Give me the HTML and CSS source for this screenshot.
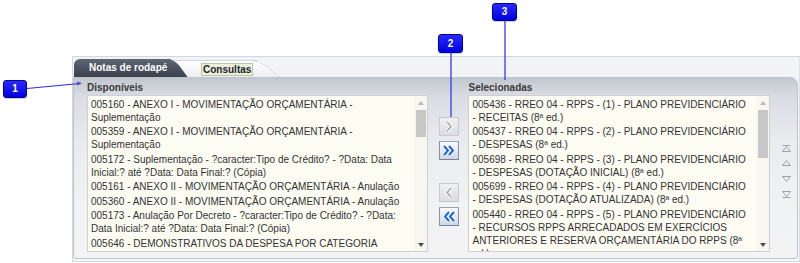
FILE: index.html
```html
<!DOCTYPE html>
<html>
<head>
    <title>Notas de rodapé - Consultas</title>
    <link rel="stylesheet" href="styles.css">
</head>
<body>
    <div class="widget">
        <div class="tabs">
            <div class="tab tab-dark">Notas de rodapé</div>
            <div class="tab tab-light"><span class="focus">Consultas</span></div>
        </div>
        <div class="panel">
            <div class="col col-left">
                <div class="label">Disponíveis</div>
                <div class="listbox">
                    <div class="items">
                        <div class="item">005160 - ANEXO I - MOVIMENTAÇÃO ORÇAMENTÁRIA - Suplementação</div>
                        <div class="item">005359 - ANEXO I - MOVIMENTAÇÃO ORÇAMENTÁRIA - Suplementação</div>
                        <div class="item">005172 - Suplementação - ?caracter:Tipo de Crédito? - ?Data: Data Inicial:? até ?Data: Data Final:? (Cópia)</div>
                        <div class="item">005161 - ANEXO II - MOVIMENTAÇÃO ORÇAMENTÁRIA - Anulação</div>
                        <div class="item">005360 - ANEXO II - MOVIMENTAÇÃO ORÇAMENTÁRIA - Anulação</div>
                        <div class="item">005173 - Anulação Por Decreto - ?caracter:Tipo de Crédito? - ?Data: Data Inicial:? até ?Data: Data Final:? (Cópia)</div>
                        <div class="item">005646 - DEMONSTRATIVOS DA DESPESA POR CATEGORIA</div>
                    </div>
                    <div class="vscroll">
                        <span class="arrow arrow-up"></span>
                        <div class="track"><div class="thumb thumb-left"></div></div>
                        <span class="arrow arrow-down"></span>
                    </div>
                </div>
            </div>

            <div class="moves">
                <button class="move move-off">
                    <svg width="18" height="17" viewBox="0 0 18 17"><polyline points="7,4 11,8.5 7,13" fill="none" stroke="#fff" stroke-width="3.4"/><polyline points="7,4 11,8.5 7,13" fill="none" stroke="#a6a8ab" stroke-width="1.7"/></svg>
                </button>
                <button class="move move-on">
                    <svg width="18" height="17" viewBox="0 0 18 17"><polyline points="4,4 8,8.5 4,13" fill="none" stroke="#fff" stroke-width="3.6"/><polyline points="9,4 13,8.5 9,13" fill="none" stroke="#fff" stroke-width="3.6"/><polyline points="4,4 8,8.5 4,13" fill="none" stroke="#1863d8" stroke-width="2"/><polyline points="9,4 13,8.5 9,13" fill="none" stroke="#1863d8" stroke-width="2"/></svg>
                </button>
                <button class="move move-off move-back">
                    <svg width="18" height="17" viewBox="0 0 18 17"><polyline points="11,4 7,8.5 11,13" fill="none" stroke="#fff" stroke-width="3.4"/><polyline points="11,4 7,8.5 11,13" fill="none" stroke="#a6a8ab" stroke-width="1.7"/></svg>
                </button>
                <button class="move move-on">
                    <svg width="18" height="17" viewBox="0 0 18 17"><polyline points="9,4 5,8.5 9,13" fill="none" stroke="#fff" stroke-width="3.6"/><polyline points="14,4 10,8.5 14,13" fill="none" stroke="#fff" stroke-width="3.6"/><polyline points="9,4 5,8.5 9,13" fill="none" stroke="#1863d8" stroke-width="2"/><polyline points="14,4 10,8.5 14,13" fill="none" stroke="#1863d8" stroke-width="2"/></svg>
                </button>
            </div>

            <div class="col col-right">
                <div class="label">Selecionadas</div>
                <div class="listbox">
                    <div class="items">
                        <div class="item">005436 - RREO 04 - RPPS - (1) - PLANO PREVIDENCIÁRIO <span class="nb">- RECEITAS</span> (8ª ed.)</div>
                        <div class="item">005437 - RREO 04 - RPPS - (2) - PLANO PREVIDENCIÁRIO <span class="nb">- DESPESAS</span> (8ª ed.)</div>
                        <div class="item">005698 - RREO 04 - RPPS - (3) - PLANO PREVIDENCIÁRIO <span class="nb">- DESPESAS</span> (DOTAÇÃO INICIAL) (8ª ed.)</div>
                        <div class="item">005699 - RREO 04 - RPPS - (4) - PLANO PREVIDENCIÁRIO <span class="nb">- DESPESAS</span> (DOTAÇÃO ATUALIZADA) (8ª ed.)</div>
                        <div class="item">005440 - RREO 04 - RPPS - (5) - PLANO PREVIDENCIÁRIO <span class="nb">- RECURSOS</span> RPPS ARRECADADOS EM EXERCÍCIOS ANTERIORES E RESERVA ORÇAMENTÁRIA DO RPPS (8ª ed.)</div>
                    </div>
                    <div class="vscroll">
                        <span class="arrow arrow-up"></span>
                        <div class="track"><div class="thumb thumb-right"></div></div>
                        <span class="arrow arrow-down"></span>
                    </div>
                </div>
            </div>

            <div class="order">
                <svg width="9" height="54" viewBox="0 0 9 54">
                    <g fill="none" stroke="#9ea1a6" stroke-width="1">
                        <line x1="0.5" y1="0.5" x2="8.5" y2="0.5"/>
                        <polygon points="4.5,1.5 0.5,6.5 8.5,6.5"/>
                        <polygon points="4.5,15.5 0.5,20.5 8.5,20.5"/>
                        <polygon points="0.5,31.5 8.5,31.5 4.5,36.5"/>
                        <polygon points="0.5,46.5 8.5,46.5 4.5,51.5"/>
                        <line x1="0.5" y1="52.5" x2="8.5" y2="52.5"/>
                    </g>
                </svg>
            </div>
        </div>
    </div>

    <!-- callouts drawn over the screenshot -->
    <svg class="leaders" width="800" height="263" viewBox="0 0 800 263">
        <g stroke="#2b2bec" stroke-width="1.2" fill="none">
            <line x1="27" y1="88.5" x2="80" y2="83.5"/>
            <line x1="451" y1="53" x2="451" y2="117"/>
            <line x1="505" y1="21" x2="505" y2="80"/>
        </g>
        <polygon points="82,83.3 77,81.6 77.4,85.4" fill="#4a4ac8"/>
    </svg>
    <div class="badge badge-1">1</div>
    <div class="badge badge-2">2</div>
    <div class="badge badge-3">3</div>
</body>
</html>
```

FILE: styles.css
```css
html, body {
    margin: 0;
    padding: 0;
    overflow: hidden;
}

body {
    position: relative;
    width: 800px;
    height: 263px;
    background-color: white;
    font-family: "Liberation Sans", Arial, sans-serif;
    font-size: 10px;
    color: #333;
}

.widget {
    box-sizing: border-box;
    width: 728px;
    height: 206px;
    margin: 56px 0 0 72px;
    padding: 0 1px 2px 0;
    border: 1px solid #d3d8df;
    border-right-color: #dde1e6;
    background: linear-gradient(#f1f3f6, #f6f7f8);
}

/* tabs */

.tabs {
    display: flex;
    height: 20px;
    padding: 2px 0 0 1px;
    box-sizing: border-box;
}

.tab {
    position: relative;
    box-sizing: border-box;
    font-weight: bold;
    white-space: nowrap;
}

    .tab::after {
        content: '';
        position: absolute;
        top: 0;
        bottom: 0;
        background: inherit;
    }

.tab-dark {
    z-index: 2;
    width: 97px;
    height: 18px;
    line-height: 18px;
    padding-left: 15px;
    color: white;
    background: linear-gradient(#5f6773, #3a414b);
    border-top-left-radius: 6px;
}

    .tab-dark::after {
        right: -10px;
        width: 20px;
        z-index: -1;
        transform: skewX(36deg);
        border-top-right-radius: 7px;
    }

.tab-light {
    z-index: 1;
    width: 99px;
    height: 17px;
    margin: 1px 0 0 -12px;
    padding: 2px 0 0 42px;
    background: linear-gradient(#ffffff, #eceef2);
    border-top: 1px solid #d2d7de;
}

    .tab-light::after {
        top: -1px;
        right: -12px;
        width: 22px;
        z-index: -1;
        transform: skewX(52deg);
        border-top: 1px solid #d2d7de;
        border-right: 1px solid #c3c9d1;
        border-top-right-radius: 9px;
    }

.focus {
    display: inline-block;
    padding: 0 1px;
    line-height: 11px;
    color: #1d2330;
    background-color: #eaefda;
    border: 1px solid #b9c6a8;
}

/* panel */

.panel {
    display: flex;
    box-sizing: border-box;
    height: 182px;
    padding: 2px 6px 6px 13px;
    border: 1px solid #bfc4cb;
    border-radius: 0 8px 3px 3px;
    background: linear-gradient(#c2c7cf 0, #d9dce2 10%, #e9ebee 35%, #f1f2f4 70%, #f3f3f4 100%);
}

.col {
    display: flex;
    flex-direction: column;
}

.col-left {
    width: 342px;
}

.col-right {
    width: 302px;
    margin-left: 9px;
}

.label {
    height: 15px;
    line-height: 15px;
    font-weight: bold;
    color: #3a3a3a;
}

.listbox {
    display: flex;
    box-sizing: border-box;
    height: 157px;
    border: 1px solid #cdcfd2;
    background-color: #fcfcf2;
}

.items {
    flex: 1;
    overflow: hidden;
    padding: 1.5px 2px 0 3px;
}

.item {
    line-height: 13px;
    margin-bottom: 1.5px;
}

.nb {
    white-space: nowrap;
}

.vscroll {
    display: flex;
    flex-direction: column;
    width: 13px;
    background-color: #f7f7ef;
}

.arrow {
    position: relative;
    display: block;
    height: 14px;
}

    .arrow::before {
        content: '';
        position: absolute;
        left: 4px;
        border-left: 3.5px solid transparent;
        border-right: 3.5px solid transparent;
    }

.arrow-up::before {
    top: 5px;
    border-bottom: 4px solid #b9babb;
}

.arrow-down {
    height: 13px;
}

    .arrow-down::before {
        top: 5px;
        border-top: 4px solid #4d4d4d;
    }

.track {
    flex: 1;
}

.thumb {
    width: 10px;
    margin-left: 2px;
    background-color: #c7c7c7;
}

.thumb-left {
    height: 27px;
}

.thumb-right {
    height: 48px;
}

/* move buttons */

.moves {
    display: flex;
    flex-direction: column;
    width: 20px;
    margin-left: 11px;
    padding-top: 37px;
}

.move {
    display: block;
    box-sizing: border-box;
    width: 20px;
    height: 19px;
    margin: 0 0 5px 0;
    padding: 0;
    border: 1px solid #c6cad0;
    background: linear-gradient(#eef0f3, #dadde2);
}

    .move svg {
        display: block;
        margin: 0 auto;
    }

.move-on {
    border-color: #9aa5b4 #8793a4 #76839a #8793a4;
    background: linear-gradient(#f8fafd, #d1d8e2);
}

.move-back {
    margin-top: 18px;
}

.order {
    width: 9px;
    margin-left: 12px;
    padding-top: 65px;
}

/* callouts */

.leaders {
    position: absolute;
    left: 0;
    top: 0;
    pointer-events: none;
}

.badge {
    position: absolute;
    box-sizing: border-box;
    width: 25px;
    height: 19px;
    line-height: 17px;
    text-align: center;
    font-weight: bold;
    font-size: 10px;
    color: white;
    background: linear-gradient(#2a2aff, #0000de);
    border: 1px solid #00009a;
    border-radius: 3px;
    box-shadow: 0 1px 1px rgba(0, 0, 0, 0.2);
}

.badge-1 {
    left: 3px;
    top: 80px;
    width: 24px;
    height: 18px;
    line-height: 16px;
}

.badge-2 {
    left: 438px;
    top: 34px;
}

.badge-3 {
    left: 492px;
    top: 3px;
    height: 18px;
    line-height: 16px;
}
```
